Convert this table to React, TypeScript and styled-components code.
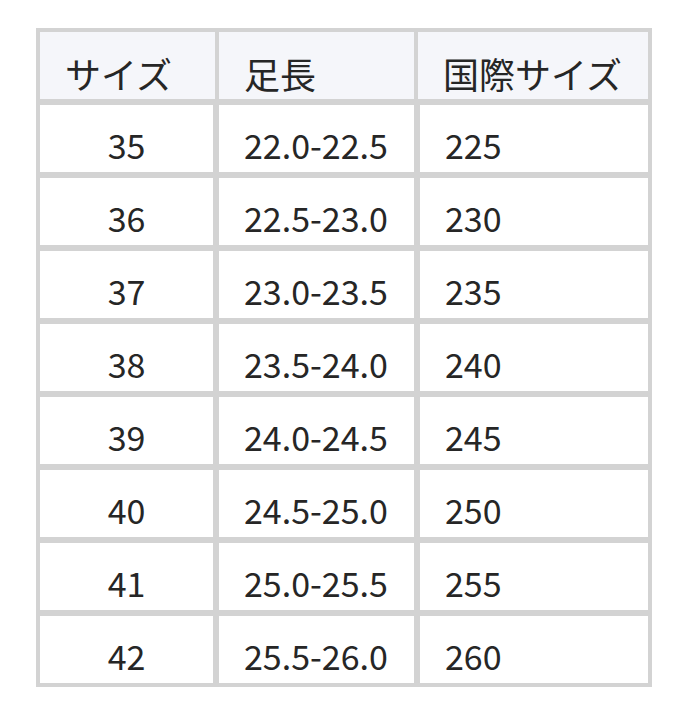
import React from 'react';
import styled, { createGlobalStyle } from 'styled-components';

type Row = {
	size: string;
	length: string;
	intl: string;
};

const rows: Row[] = [
	{ size: '35', length: '22.0-22.5', intl: '225' },
	{ size: '36', length: '22.5-23.0', intl: '230' },
	{ size: '37', length: '23.0-23.5', intl: '235' },
	{ size: '38', length: '23.5-24.0', intl: '240' },
	{ size: '39', length: '24.0-24.5', intl: '245' },
	{ size: '40', length: '24.5-25.0', intl: '250' },
	{ size: '41', length: '25.0-25.5', intl: '255' },
	{ size: '42', length: '25.5-26.0', intl: '260' },
];

const App: React.FC = () => {
	return (
		<>
			<GlobalStyle />
			<Page>
				<SizeTable>
					<HeaderRow>
						<HeaderCell>サイズ</HeaderCell>
						<HeaderCell $divider>足長</HeaderCell>
						<HeaderCell $divider>国際サイズ</HeaderCell>
					</HeaderRow>
					{rows.map((row) => (
						<BodyRow key={row.size}>
							<BodyCell $center>{row.size}</BodyCell>
							<BodyCell $divider>{row.length}</BodyCell>
							<BodyCell $divider>{row.intl}</BodyCell>
						</BodyRow>
					))}
				</SizeTable>
			</Page>
		</>
	);
};

export default App;

const GlobalStyle = createGlobalStyle`
	html, body {
		margin: 0;
		padding: 0;
		background: #ffffff;
	}
	body {
		font-family: "Noto Sans CJK JP", "Noto Sans", sans-serif;
		color: #262626;
	}
`;

const Page = styled.div`
	padding: 28px 0 0 36px;
`;

const SizeTable = styled.div`
	width: 608px;
	border: 4px solid #d3d3d3;
`;

const HeaderRow = styled.div`
	display: grid;
	grid-template-columns: 175px 199px 234px;
	height: 67px;
	background-color: #f5f6fa;
`;

const BodyRow = styled.div`
	display: grid;
	grid-template-columns: 173px 201px 234px;
	height: 73px;
	border-top: 6px solid #d3d3d3;
	box-sizing: border-box;
	background-color: #ffffff;
`;

const HeaderCell = styled.div<{ $divider?: boolean }>`
	display: flex;
	align-items: flex-end;
	box-sizing: border-box;
	padding: 0 0 4px 25px;
	border-left: ${({ $divider }) => ($divider ? '4px solid #d3d3d3' : 'none')};
	font-size: 36px;
	line-height: 1.2;
	font-weight: 400;
	white-space: nowrap;
`;

const BodyCell = styled.div<{ $divider?: boolean; $center?: boolean }>`
	display: flex;
	align-items: flex-end;
	justify-content: ${({ $center }) => ($center ? 'center' : 'flex-start')};
	box-sizing: border-box;
	padding: ${({ $center }) => ($center ? '0 0 6px 0' : '0 0 6px 25px')};
	border-left: ${({ $divider }) => ($divider ? '6px solid #d3d3d3' : 'none')};
	font-size: 34px;
	line-height: 1.2;
	font-weight: 400;
	white-space: nowrap;
`;
